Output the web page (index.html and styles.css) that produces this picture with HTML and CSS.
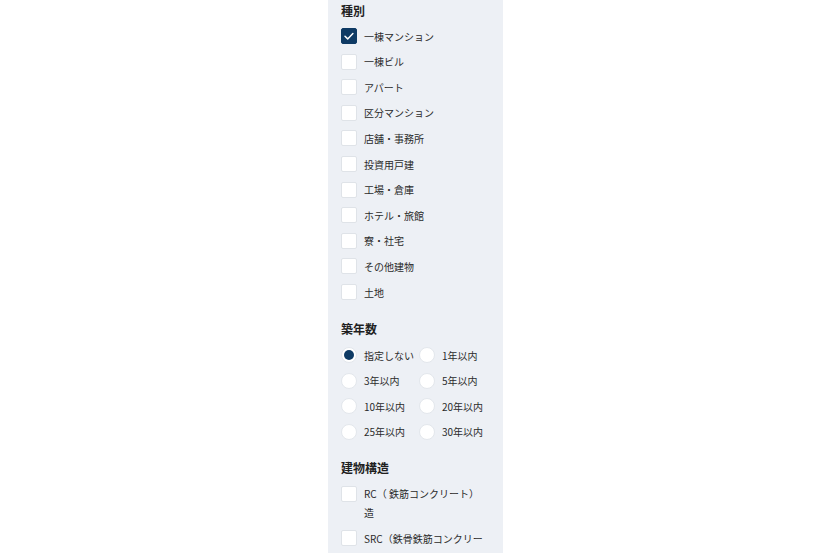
FILE: index.html
```html
<!DOCTYPE html>
<html lang="ja">
<head>
  <meta charset="UTF-8" />
  <title>絞り込み</title>
  <meta name="viewport" content="width=device-width, initial-scale=1.0" />
  <link rel="stylesheet" href="styles.css">
</head>
<body>

<div class="filter-panel">
  <section class="filter-group">
    <h3>種別</h3>
    <label class="check-row"><span class="box checked"><svg viewBox="0 0 16 16" width="16" height="16"><path d="M4 8.3l2.7 2.6 5.2-5.4" fill="none" stroke="#fff" stroke-width="1.5" stroke-linecap="round" stroke-linejoin="round"/></svg></span><span class="text">一棟マンション</span></label>
    <label class="check-row"><span class="box"></span><span class="text">一棟ビル</span></label>
    <label class="check-row"><span class="box"></span><span class="text">アパート</span></label>
    <label class="check-row"><span class="box"></span><span class="text">区分マンション</span></label>
    <label class="check-row"><span class="box"></span><span class="text">店舗・事務所</span></label>
    <label class="check-row"><span class="box"></span><span class="text">投資用戸建</span></label>
    <label class="check-row"><span class="box"></span><span class="text">工場・倉庫</span></label>
    <label class="check-row"><span class="box"></span><span class="text">ホテル・旅館</span></label>
    <label class="check-row"><span class="box"></span><span class="text">寮・社宅</span></label>
    <label class="check-row"><span class="box"></span><span class="text">その他建物</span></label>
    <label class="check-row"><span class="box"></span><span class="text">土地</span></label>
  </section>

  <section class="filter-group">
    <h3>築年数</h3>
    <div class="radio-grid">
      <label class="check-row"><span class="dot selected"></span><span class="text">指定しない</span></label>
      <label class="check-row"><span class="dot"></span><span class="text">1年以内</span></label>
      <label class="check-row"><span class="dot"></span><span class="text">3年以内</span></label>
      <label class="check-row"><span class="dot"></span><span class="text">5年以内</span></label>
      <label class="check-row"><span class="dot"></span><span class="text">10年以内</span></label>
      <label class="check-row"><span class="dot"></span><span class="text">20年以内</span></label>
      <label class="check-row"><span class="dot"></span><span class="text">25年以内</span></label>
      <label class="check-row"><span class="dot"></span><span class="text">30年以内</span></label>
    </div>
  </section>

  <section class="filter-group">
    <h3>建物構造</h3>
    <label class="check-row"><span class="box"></span><span class="text">RC（ 鉄筋コンクリート）造</span></label>
    <label class="check-row"><span class="box"></span><span class="text">SRC（鉄骨鉄筋コンクリート）造</span></label>
  </section>
</div>

</body>
</html>
```

FILE: styles.css
```css
* {
  box-sizing: border-box;
}

body {
  margin: 0;
  background: #fff;
  font-family: "Noto Sans CJK JP", "Noto Sans", sans-serif;
  color: #2b2b2b;
}

.filter-panel {
  width: 175px;
  min-height: 553px;
  margin-left: 328px;
  padding: 1px 16px 0 13px;
  background: #edf0f5;
}

.filter-group {
  display: flex;
  flex-direction: column;
  gap: 6.6px;
  margin-bottom: 17px;
}

h3 {
  margin: 0;
  font-size: 12px;
  line-height: 19px;
  font-weight: 700;
  color: #1f1f1f;
}

.check-row {
  display: flex;
  align-items: flex-start;
  font-size: 10px;
  line-height: 19px;
  color: #2b2b2b;
  white-space: nowrap;
}

.check-row .text {
  flex: 1;
  margin-left: 7px;
  white-space: normal;
}

.box {
  flex: none;
  width: 16px;
  height: 16px;
  margin-top: 1.5px;
  background: #fff;
  border: 1px solid #dfe3e8;
  border-radius: 2px;
}

.box.checked {
  background: #0e3a64;
  border-color: #0e3a64;
}

.box svg {
  display: block;
  margin: -1px;
}

.dot {
  flex: none;
  position: relative;
  width: 16px;
  height: 16px;
  margin-top: 1.5px;
  background: #fff;
  border: 1px solid #e3e7ec;
  border-radius: 50%;
}

.dot.selected::after {
  content: "";
  position: absolute;
  top: 2px;
  left: 2px;
  width: 10px;
  height: 10px;
  border-radius: 50%;
  background: #0e3a64;
}

.radio-grid {
  display: grid;
  grid-template-columns: 78px auto;
  row-gap: 6.6px;
  margin-top: 1.5px;
}
```
